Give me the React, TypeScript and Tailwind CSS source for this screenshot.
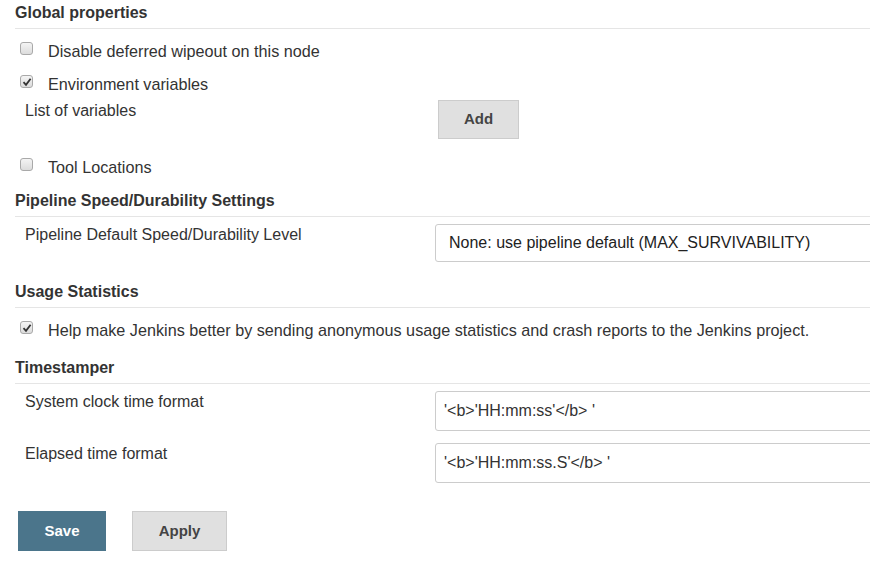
import React from "react";

const FONT = { fontFamily: '"Liberation Sans", Arial, sans-serif' };

function Box({ checked }: { checked?: boolean }) {
  return (
    <span className="relative -top-[2px] inline-flex items-center justify-center w-[13px] h-[13px] rounded-[3px] border border-[#a9a9a9] bg-gradient-to-b from-[#f4f4f4] to-[#dcdcdc] shrink-0">
      {checked && (
        <svg width="10" height="10" viewBox="0 0 10 10">
          <path d="M1.5 5.2 L4 7.8 L8.6 1.8" fill="none" stroke="#333" strokeWidth="1.8" />
        </svg>
      )}
    </span>
  );
}

function Heading({ title }: { title: string }) {
  return (
    <div className="ml-[15px] h-[29px] pt-[3px] leading-[20px] border-b border-[#e5e5e5] text-[16px] font-bold text-[#333]">
      {title}
    </div>
  );
}

function CheckRow({ label, checked }: { label: string; checked?: boolean }) {
  return (
    <div className="flex items-center h-[33px] pl-[20px]">
      <Box checked={checked} />
      <span className="ml-[15px] text-[16.2px] leading-[20px] text-[#333] whitespace-nowrap">{label}</span>
    </div>
  );
}

function FieldRow({ label, value, mt }: { label: string; value: string; mt: string }) {
  return (
    <div className={`flex ${mt}`}>
      <div className="w-[435px] pl-[25px] pt-[1px] leading-[20px] text-[16px] text-[#333] shrink-0">{label}</div>
      <div className="w-[600px] h-[40px] shrink-0 border border-[#ccc] rounded-[3px] pl-[8px] flex items-center text-[16px] text-[#333] whitespace-nowrap">
        {value}
      </div>
    </div>
  );
}

export default function App() {
  return (
    <div style={FONT} className="w-[870px] h-[564px] overflow-hidden bg-white">
      <Heading title="Global properties" />
      <div className="pt-[5px]">
        <CheckRow label="Disable deferred wipeout on this node" />
        <CheckRow label="Environment variables" checked />
      </div>
      <div className="flex">
        <div className="w-[438px] pl-[25px] pt-[1px] leading-[20px] text-[16px] text-[#333]">List of variables</div>
        <button className="w-[81px] h-[39px] bg-[#e0e0e0] border border-[#ccc] text-[15px] font-bold text-[#444]">
          Add
        </button>
      </div>
      <div className="mt-[11px]">
        <CheckRow label="Tool Locations" />
      </div>

      <div className="mt-[5px]">
        <Heading title="Pipeline Speed/Durability Settings" />
      </div>
      <div className="flex mt-[7px]">
        <div className="w-[435px] pl-[25px] pt-[1px] leading-[20px] text-[16px] text-[#333] shrink-0">
          Pipeline Default Speed/Durability Level
        </div>
        <div className="w-[600px] h-[38px] shrink-0 border border-[#ccc] rounded-[3px] pl-[13px] flex items-center text-[16px] text-[#222] whitespace-nowrap">
          None: use pipeline default (MAX_SURVIVABILITY)
        </div>
      </div>

      <div className="mt-[17px]">
        <Heading title="Usage Statistics" />
      </div>
      <div className="mt-[5px]">
        <CheckRow
          label="Help make Jenkins better by sending anonymous usage statistics and crash reports to the Jenkins project."
          checked
        />
      </div>

      <div className="mt-[9px]">
        <Heading title="Timestamper" />
      </div>
      <FieldRow mt="mt-[7px]" label="System clock time format" value="'<b>'HH:mm:ss'</b> '" />
      <FieldRow mt="mt-[12px]" label="Elapsed time format" value="'<b>'HH:mm:ss.S'</b> '" />

      <div className="flex mt-[28px] pl-[18px] gap-[26px]">
        <button className="w-[88px] h-[40px] bg-[#4b758b] text-white text-[15px] font-bold">Save</button>
        <button className="w-[95px] h-[40px] bg-[#e0e0e0] border border-[#ccc] text-[15px] font-bold text-[#444]">
          Apply
        </button>
      </div>
    </div>
  );
}
